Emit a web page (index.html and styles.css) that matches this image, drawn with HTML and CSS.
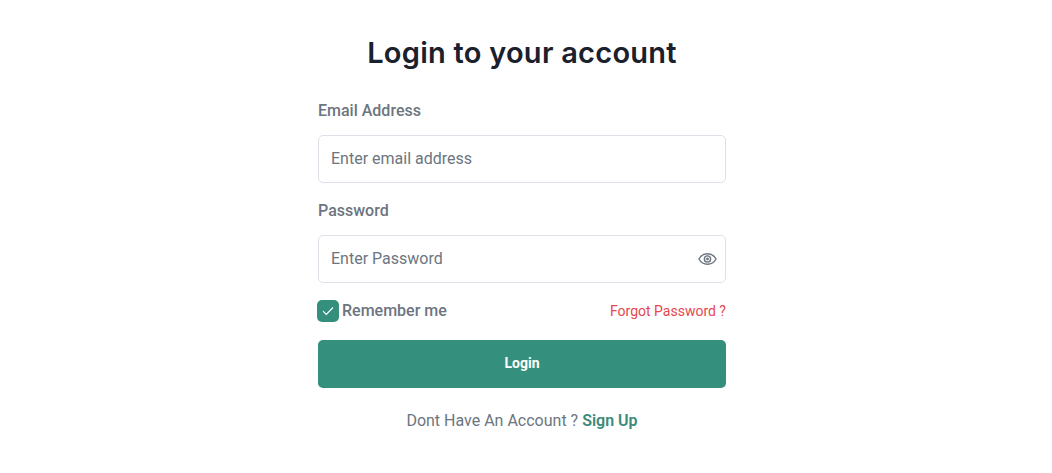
FILE: index.html
```html
<!DOCTYPE html>
<html lang="en">
<head>
    <meta charset="UTF-8">
    <meta name="viewport" content="width=device-width, initial-scale=1.0">
    <title>Login</title>
    <link rel="stylesheet" href="styles.css">
</head>
<body>
    <div class="container">
        <h1 class="title">Login to your account</h1>
        <form class="login-form">
            <label class="field-label" for="email">Email Address</label>
            <div class="input-wrap">
                <input class="text-input" id="email" type="text" placeholder="Enter email address">
            </div>

            <label class="field-label" for="password">Password</label>
            <div class="input-wrap">
                <input class="text-input" id="password" type="password" placeholder="Enter Password">
                <svg class="eye-icon" width="19" height="14" viewBox="0 0 20 14" fill="none" stroke="#6c7580" stroke-width="1.5">
                    <path d="M1 7C3 3.4 6.2 1.5 10 1.5S17 3.4 19 7C17 10.6 13.8 12.500 10 12.500S3 10.600 1 7Z"/>
                    <circle cx="10" cy="7" r="3.300"/>
                    <circle cx="10" cy="7" r="1.500" fill="#6c7580" stroke="none"/>
                </svg>
            </div>

            <div class="options-row">
                <label class="remember">
                    <span class="checkbox">
                        <svg width="12" height="10" viewBox="0 0 12 10" fill="none" stroke="#fff" stroke-width="1.1">
                            <path d="M1 5.200L4.300 8.500L11 1.500"/>
                        </svg>
                    </span>
                    <span class="remember-text">Remember me</span>
                </label>
                <a class="forgot-link" href="#">Forgot Password ?</a>
            </div>

            <button class="login-btn" type="button">Login</button>
            <p class="signup-text">Dont Have An Account ? <a class="signup-link" href="#">Sign Up</a></p>
        </form>
    </div>
</body>
</html>
```

FILE: styles.css
```css
body {
    font-family: Roboto, sans-serif;
    background: #fff;
    margin: 0;
    padding: 0 8px 0 0;
}
.container {
    width: 408px;
    margin: 0 auto;
    padding-top: 34px;
}
.title {
    font-family: Inter, sans-serif;
    font-size: 29px;
    font-weight: 600;
    line-height: 38px;
    letter-spacing: 0.25px;
    color: #1a202c;
    text-align: center;
    margin: 0 0 27px;
}
.field-label {
    display: block;
    font-size: 16px;
    font-weight: 500;
    line-height: 24px;
    color: #6c7580;
    margin-bottom: 12px;
}
.input-wrap {
    position: relative;
    margin-bottom: 16px;
}
.text-input {
    display: block;
    box-sizing: border-box;
    width: 100%;
    height: 48px;
    padding: 0 12px 2px;
    border: 1px solid #dde2e8;
    border-radius: 5px;
    background: #fff;
    font-family: Roboto, sans-serif;
    font-size: 16px;
    color: #6c7580;
    outline: none;
}
.text-input::placeholder {
    color: #6c7580;
    opacity: 1;
}
.eye-icon {
    position: absolute;
    right: 9px;
    top: 17px;
}
.options-row {
    display: flex;
    justify-content: space-between;
    align-items: center;
    height: 26px;
    margin-top: -1px;
    margin-bottom: 16px;
}
.remember {
    display: flex;
    align-items: center;
    gap: 3px;
    margin-left: -1px;
    font-size: 16px;
    font-weight: 500;
    color: #6c7580;
}
.remember-text {
    margin-bottom: 2px;
}
.checkbox {
    display: flex;
    align-items: center;
    justify-content: center;
    width: 22px;
    height: 22px;
    border-radius: 5px;
    background: #358f7d;
}
.forgot-link {
    font-size: 14px;
    color: #e5484d;
    text-decoration: none;
}
.login-btn {
    display: block;
    width: 100%;
    height: 48px;
    padding: 0 0 2px;
    border: none;
    border-radius: 5px;
    background: #358f7d;
    color: #fff;
    font-family: Roboto, sans-serif;
    font-size: 14px;
    font-weight: 700;
}
.signup-text {
    margin: 21px 0 0;
    font-size: 16px;
    line-height: 24px;
    color: #6c7580;
    text-align: center;
}
.signup-link {
    color: #3b8a7a;
    font-weight: 600;
    text-decoration: none;
}
```
